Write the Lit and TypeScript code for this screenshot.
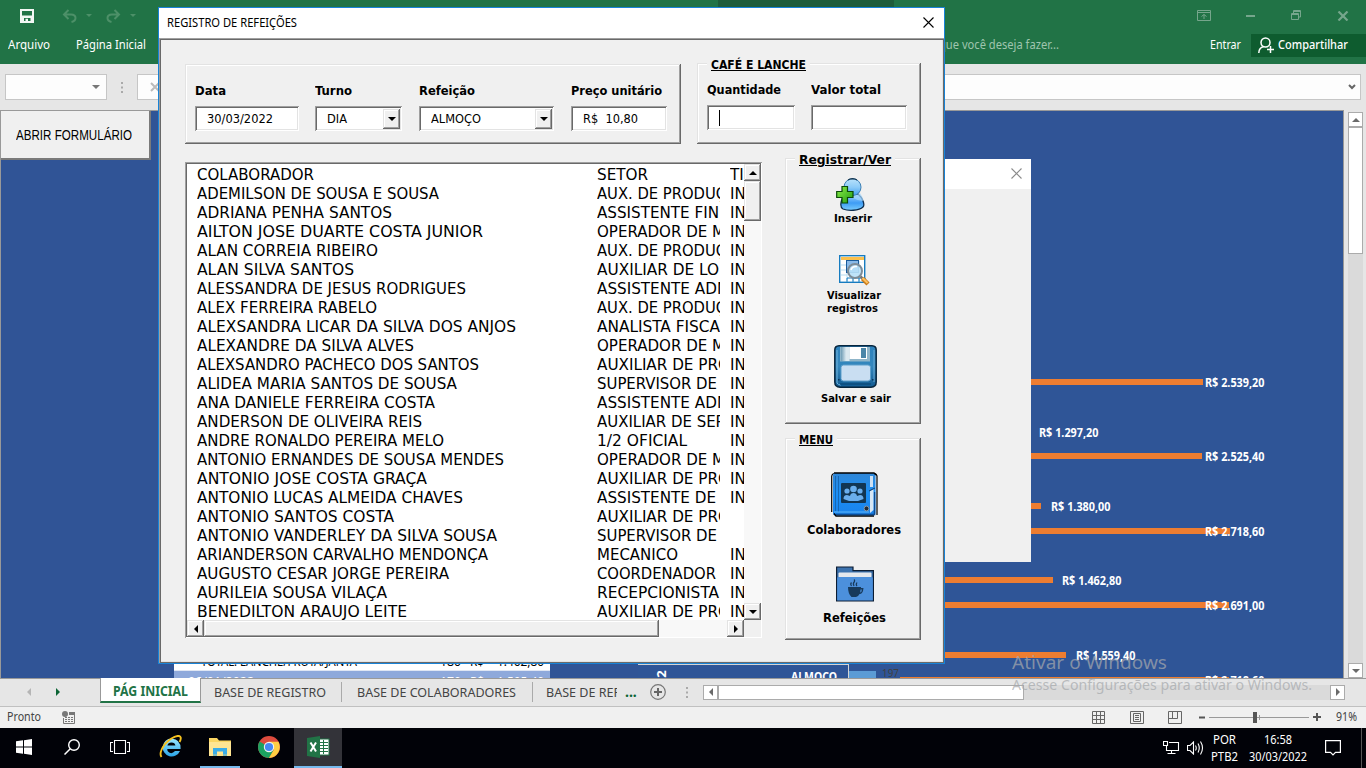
import { LitElement, html, css, svg } from "lit";
import { customElement, property } from "lit/decorators.js";

/** One line of text drawn to an exact width (w) or with a fixed horizontal factor (k). */
@customElement("x-text")
class XText extends LitElement {
  @property({ type: Number }) w = 0;
  @property({ type: Number }) k = 1;
  static styles = css`
    :host { display: inline-block; white-space: pre; flex: none; }
    span { display: inline-block; transform-origin: 0 50%; white-space: pre; }
    :host([u]) span { text-decoration: underline; }
  `;
  render() {
    return html`<span><slot></slot></span>`;
  }
  firstUpdated() {
    const s = this.renderRoot.querySelector("span") as HTMLElement;
    const n = s.getBoundingClientRect().width;
    const k = this.w ? this.w / n : this.k;
    s.style.transform = `scaleX(${k})`;
    this.style.width = `${n * k}px`;
  }
}

const t = (s: string, w: number) => html`<x-text .w=${w}>${s}</x-text>`;
const tu = (s: string, w: number) => html`<x-text u .w=${w}>${s}</x-text>`;
const LIST_K = 1.05;

/* name, name width, sector, sector width, type */
const people: [string, number, string, number, string][] = [
  ["COLABORADOR", 117, "SETOR", 51, "TI"],
  ["ADEMILSON DE SOUSA E SOUSA", 242, "AUX. DE PRODUÇ", 129, "IN"],
  ["ADRIANA PENHA SANTOS", 195, "ASSISTENTE FIN", 122, "IN"],
  ["AILTON JOSE DUARTE COSTA JUNIOR", 286, "OPERADOR DE M", 128, "IN"],
  ["ALAN CORREIA RIBEIRO", 181, "AUX. DE PRODUÇ", 129, "IN"],
  ["ALAN SILVA SANTOS", 157, "AUXILIAR DE LO", 122, "IN"],
  ["ALESSANDRA DE JESUS RODRIGUES", 269, "ASSISTENTE ADM", 133, "IN"],
  ["ALEX FERREIRA RABELO", 180, "AUX. DE PRODUÇ", 129, "IN"],
  ["ALEXSANDRA LICAR DA SILVA DOS ANJOS", 319, "ANALISTA FISCA", 123, "IN"],
  ["ALEXANDRE DA SILVA ALVES", 217, "OPERADOR DE M", 128, "IN"],
  ["ALEXSANDRO PACHECO DOS SANTOS", 282, "AUXILIAR DE PRO", 133, "IN"],
  ["ALIDEA MARIA SANTOS DE SOUSA", 260, "SUPERVISOR DE", 120, "IN"],
  ["ANA DANIELE FERREIRA COSTA", 238, "ASSISTENTE ADM", 133, "IN"],
  ["ANDERSON DE OLIVEIRA REIS", 225, "AUXILIAR DE SER", 129, "IN"],
  ["ANDRE RONALDO PEREIRA MELO", 247, "1/2 OFICIAL", 90, "IN"],
  ["ANTONIO ERNANDES DE SOUSA MENDES", 307, "OPERADOR DE M", 128, "IN"],
  ["ANTONIO JOSE COSTA GRAÇA", 230, "AUXILIAR DE PRO", 133, "IN"],
  ["ANTONIO LUCAS ALMEIDA CHAVES", 266, "ASSISTENTE DE", 119, "IN"],
  ["ANTONIO SANTOS COSTA", 197, "AUXILIAR DE PRO", 133, ""],
  ["ANTONIO VANDERLEY DA SILVA SOUSA", 300, "SUPERVISOR DE", 120, ""],
  ["ARIANDERSON CARVALHO MENDONÇA", 291, "MECANICO", 81, "IN"],
  ["AUGUSTO CESAR JORGE PEREIRA", 252, "COORDENADOR", 119, "IN"],
  ["AURILEIA SOUSA VILAÇA", 190, "RECEPCIONISTA", 122, "IN"],
  ["BENEDILTON ARAUJO LEITE", 210, "AUXILIAR DE PRO", 133, "IN"],
];

/* bar middle y, bar end x, label x, label; coordinates on the sheet canvas */
const bars: [number, number, number, string][] = [
  [382, 1203, 1205, "R$ 2.539,20"],
  [432, 1027, 1039, "R$ 1.297,20"],
  [456, 1202, 1205, "R$ 2.525,40"],
  [506, 1041, 1051, "R$ 1.380,00"],
  [531, 1230, 1205, "R$ 2.718,60"],
  [580, 1053, 1062, "R$ 1.462,80"],
  [605, 1229, 1205, "R$ 2.691,00"],
  [655, 1066, 1076, "R$ 1.559,40"],
  [680, 1229, 1205, "R$ 2.718,60"],
];

const icon = (w: number, h: number, body: unknown) =>
  html`<svg width=${w} height=${h} viewBox="0 0 ${w} ${h}">${body}</svg>`;

const arrow = (dir: string) => {
  const d: Record<string, string> = {
    up: "M4 0 L8 4 H0Z", down: "M0 0 H8 L4 4Z", left: "M4 0 V8 L0 4Z", right: "M0 0 V8 L4 4Z",
  };
  const v = dir === "up" || dir === "down";
  return html`<svg width=${v ? 8 : 4} height=${v ? 4 : 8}><path d=${d[dir]} fill="currentColor" /></svg>`;
};

const userAdd = icon(30, 33, svg`
  <defs>
    <linearGradient id="ua" x1="0" y1="0" x2="0" y2="1"><stop offset="0" stop-color="#b9e2fb"/><stop offset=".5" stop-color="#8ccbf8"/><stop offset="1" stop-color="#3f9def"/></linearGradient>
    <linearGradient id="ub" x1="0" y1="0" x2="0" y2="1"><stop offset="0" stop-color="#a8d8ff"/><stop offset=".55" stop-color="#3e9cf5"/><stop offset="1" stop-color="#79cdfd"/></linearGradient>
    <linearGradient id="uc" x1="0" y1="0" x2="1" y2="1"><stop offset="0" stop-color="#8df04a"/><stop offset="1" stop-color="#1f9b10"/></linearGradient>
  </defs>
  <path d="M7 31 C3 29 5 20 10 16 H22 C27 20 29 27 27 29 C23 33 12 33 7 31Z" fill="url(#ub)" stroke="#0c2c4e" stroke-width="1.300"/>
  <circle cx="16.500" cy="9.200" r="8.500" fill="url(#ua)" stroke="#3d7fb4" stroke-width="1"/>
  <path d="M12 2Q14 .8 16.500 .7Q19 .8 21 2" fill="none" stroke="#16364f" stroke-width="1.200"/>
  <path d="M17 18Q21 18 24 15Q27 19 27.500 23Q22 23 17 20Z" fill="#a5d7fd" opacity=".7"/>
  <path d="M6 8.500 H11.500 V13.500 H17 V19.500 H11.500 V25 H6 V19.500 H.7 V13.500 H6Z" fill="url(#uc)" stroke="#0a4a08" stroke-width="1.200"/>`);

const tableSearch = icon(31, 31, svg`
  <rect x=".7" y=".7" width="25" height="26.600" fill="#fff" stroke="#177cc0" stroke-width="1.400"/>
  <rect x="2" y="2" width="23" height="3" fill="#fbc04c"/>
  <path d="M2 10h6M2 15h6M2 20h6M8 6v21M14 6v21M20 6v21" stroke="#b6dcf2" fill="none"/>
  <rect x="7.500" y="5.500" width="12" height="12" fill="#89b9e8" stroke="#1c5c9c"/>
  <path d="M8 27v-4h18v4M14 23v4M20 23v4" stroke="#177cc0" fill="none"/>
  <circle cx="16" cy="16" r="7" fill="#b9e1fa" fill-opacity=".9" stroke="#7d8c98" stroke-width="2"/>
  <path d="M12 15 Q13 11 18 11.500" stroke="#fff" stroke-width="1.600" fill="none"/>
  <path d="M21.500 21.500 L24 24" stroke="#777" stroke-width="2.500"/>
  <path d="M23.500 23.500 L29 29" stroke="#c97a1a" stroke-width="4.400"/><path d="M23.500 23 L28.600 28" stroke="#fdc05e" stroke-width="2.200"/>`);

const floppy = icon(43, 43, svg`
  <defs><linearGradient id="fa" x1="0" y1="0" x2="0" y2="1"><stop offset="0" stop-color="#2d82bd"/><stop offset=".5" stop-color="#3487bd"/><stop offset="1" stop-color="#125a91"/></linearGradient>
  <linearGradient id="fb" x1="0" y1="0" x2="1" y2="0"><stop offset="0" stop-color="#6e9cb5"/><stop offset=".6" stop-color="#dbe9f0"/></linearGradient></defs>
  <path d="M5 .8 H38 Q42.200 1 42.200 5 V37 Q42.200 42 37 42.200 H6 Q.8 42 .8 37 V5 Q.8 1 5 .8Z" fill="url(#fa)" stroke="#08263e" stroke-width="1.500"/>
  <path d="M3 5V38Q4 40 7 40" stroke="#72b4dc" fill="none"/><path d="M40 5V37" stroke="#6ba9d2"/>
  <rect x="6" y="2" width="30" height="14.500" fill="#8fb5c9"/>
  <rect x="7" y="2" width="8.500" height="14" fill="url(#fb)"/>
  <rect x="15.500" y="2" width="17.500" height="12" fill="#fff"/><rect x="27" y="3" width="5" height="10" fill="#4b86a8"/>
  <rect x="7" y="20" width="29.500" height="16" rx="2.500" fill="#c9def2" stroke="#5e9fcb"/>
  <path d="M6 39H37" stroke="#0d4c7d" stroke-width="1.500"/><rect x="4" y="34" width="1.500" height="1.500" fill="#09345a"/><rect x="38" y="34" width="1.500" height="1.500" fill="#09345a"/>`);

const contactBook = icon(47, 45, svg`
  <defs><linearGradient id="cb" x1="0" y1="0" x2="0" y2="1"><stop offset="0" stop-color="#2f86d6"/><stop offset=".5" stop-color="#1b8ff5"/><stop offset="1" stop-color="#1a82ea"/></linearGradient></defs>
  <path d="M.7 40V4Q1 2 3 1.500M46 43V4Q45.500 2 44 1.500" stroke="#000" stroke-width="1.200" fill="none"/>
  <rect x="2" y="1" width="42.500" height="42.500" rx="2.500" fill="url(#cb)"/>
  <path d="M3 1H43L45 3M3 41.500L5 44H43" stroke="#000" stroke-width="1.400" fill="none"/>
  <path d="M4.500 4V39M7.500 4V40" stroke="#1567b4" stroke-width="1"/>
  <path d="M3 40H38" stroke="#5cb5f8"/><path d="M5 42.500H43.500V20" stroke="#0c4c94" stroke-width="1.500" fill="none"/>
  <rect x="39" y="4" width="3" height="11" fill="#cfe1f2"/><path d="M39 19L42.500 17V38L39 41Z" fill="#d7e7f5"/><path d="M38 19L44 16" stroke="#123a67"/>
  <rect x="10" y="11" width="25" height="20" rx="1" fill="#123652"/>
  <g fill="#6aaeec"><circle cx="22.500" cy="17" r="3.300"/><circle cx="16" cy="19" r="2.600"/><circle cx="29" cy="19" r="2.600"/>
  <path d="M12.500 27Q12.500 23 16 23L19 24Q19.500 21 22.500 21Q25.500 21 26 24L29 23Q32.500 23 32.500 27L27 29H18Z"/></g>
  <circle cx="35.500" cy="36.500" r="2.400" fill="#222c36" stroke="#8a9aa8"/>`);

const cupFolder = icon(38, 36, svg`
  <path d="M.6 35V1H17V4.600H37.400V35Z" fill="#3c72ae" stroke="#0c1d33" stroke-width="1.200"/>
  <rect x="2.500" y="6.500" width="33" height="5" rx="1" fill="#e4e8ed"/>
  <path d="M1.200 11.500 Q2 11 3 11H35Q36.800 11 36.800 12V34.300H1.200Z" fill="#4c90dc"/>
  <path d="M12 21H25V22H27.500Q27 28 23.500 28Q22 31 20 31H15.500Q12 28 12 21ZM24.500 23.500L24.200 26.500Q25.800 26 25.900 23.500Z" fill="#173a5c"/>
  <path d="M15.500 20Q14 18 15.500 16.500M18 20Q16.500 17.500 18.500 15.500Q19 14.500 18 13.500M21 20Q19.500 18.500 21 16.500" stroke="#173a5c" stroke-width="1.200" fill="none"/>`);

const chrome = icon(22, 22, svg`
  <circle cx="11" cy="11" r="11" fill="#dd4b3e"/>
  <path d="M11 11L1.500 5.500A11 11 0 0 0 11 22L15.800 13.700Z" fill="#1ba261"/>
  <path d="M11 22A11 11 0 0 0 20.500 5.800H11L15.800 13.700Z" fill="#ffce43"/>
  <circle cx="11" cy="11" r="5.200" fill="#f3f3f3"/><circle cx="11" cy="11" r="4.100" fill="#4688f4"/>`);

const ie = icon(24, 24, svg`
  <defs><linearGradient id="ie" x1="0" y1="0" x2="0" y2="1"><stop offset="0" stop-color="#9be6ff"/><stop offset="1" stop-color="#2aa5e8"/></linearGradient></defs>
  <path d="M12.500 3.500A9 9 0 1 0 21 16H16Q12.500 20 9 16.500Q8.200 15.500 8.300 14H21.600Q22 4.200 12.500 3.500ZM8.400 10.500Q9 7.500 12.500 7.500Q16 7.700 16.400 10.500Z" fill="url(#ie)"/>
  <path d="M2.500 22Q-.5 18 6 9Q13 1.500 19.500 .8Q23.500 1.500 20.500 7" fill="none" stroke="#f5c11f" stroke-width="1.900"/>`);

const folderIcon = icon(22, 20, svg`
  <path d="M0 3V1H8L10 3.500H22V19H0Z" fill="#fbd663"/><path d="M0 5H22V19H0Z" fill="#ffe593"/>
  <path d="M4 11H18V19H14V14.500H8V19H4Z" fill="#3aace8"/><path d="M4 17H18V19H4Z" fill="#fbd36a" opacity=".35"/>`);

const excelIcon = icon(23, 22, svg`
  <rect x="11" y="3" width="11" height="16" fill="#fff" stroke="#217346"/>
  <path d="M12 6.500H21M12 9.500H21M12 12.500H21M12 15.500H21M16.500 4V18" stroke="#217346" fill="none"/>
  <path d="M0 2L13 0V22L0 20Z" fill="#217346"/>
  <path d="M3.500 6.500L9 15.500M9 6.500L3.500 15.500" stroke="#fff" stroke-width="2"/>`);

@customElement("app-root")
class AppRoot extends LitElement {
  static styles = css`
    :host { display: block; position: relative; width: 1366px; height: 768px; overflow: hidden;
      font-family: "Noto Sans", "Open Sans", sans-serif; font-size: 12px; line-height: 16px; color: #000; }
    * { box-sizing: border-box; }
    svg { display: block; flex: none; }
    .row { display: flex; align-items: center; }
    .excel { display: flex; flex-direction: column; width: 1366px; height: 768px; }

    .head { height: 64px; background: #217346; color: #fff; display: grid; grid-template-rows: 31px 33px; }
    .quick { padding: 0 17px 0 20px; color: #f2f7f4; }
    .undo { margin-left: 28px; color: #4d9068; gap: 9px; }
    .redo { margin-left: 14px; color: #4d9068; gap: 9px; }
    .tools { height: 8px; width: 176px; background: #1e5c3a; align-self: flex-start; margin-left: 582px; }
    .winbtns { margin-left: auto; color: #76a68c; gap: 35px; }
    .menu { padding-left: 8px; padding-bottom: 5px; }
    .menu .m2 { margin-left: 26px; }
    .tell { margin-left: 793px; color: #9fc5ae; width: 134px; }
    .enter { margin-left: 137px; }
    .share { margin-left: auto; width: 115px; height: 23px; background: #0e5c2f; padding-left: 7px; gap: 4px; font-weight: 500; }

    .formula { height: 46px; background: #e6e6e6; padding-left: 5px; }
    .namebox { width: 102px; height: 26px; border: 1px solid #c6c6c6; background: #fdfdfd; justify-content: flex-end; padding-right: 6px; color: #777; }
    .dots { width: 30px; padding-left: 14px; color: #aaa; }
    .fbox { width: 1224px; height: 26px; border: 1px solid #c6c6c6; background: #fdfdfd; justify-content: space-between; padding: 0 4px 0 12px; color: #bbb; }

    .mid { height: 568px; display: flex; background: #e6e6e6; }
    .sheet { position: relative; width: 1344px; height: 568px; background: #305496; border: 1px solid #999; border-bottom: 0; overflow: hidden; }
    .canvas { position: absolute; left: -1px; top: -111px; width: 1344px; height: 680px; }
    .chart { position: absolute; left: 638px; top: 160px; width: 705px; height: 520px; background: #2f5597; }
    .open { position: relative; width: 150px; height: 49px; background: #f0f0f0; border-right: 2px solid #7a7a7a; border-bottom: 2px solid #7a7a7a; padding-left: 15px; font: 14px/16px "Liberation Sans", sans-serif; }
    .bar { position: absolute; left: 900px; height: 6px; background: #ed7d31; }
    .blabel { position: absolute; color: #fff; font-weight: 700; font-size: 11.500px; }
    .pivot { position: absolute; left: 174px; top: 652px; width: 376px; font-size: 12.500px; }
    .prow { height: 19px; background: #fff; display: grid; grid-template-columns: 27px 239px 30px 27px 50px; align-items: center; padding-top: 1px; border-bottom: 1px solid #dfe6f3; }
    .prow.sub { background: #8ea9db; color: #fff; padding-top: 2px; border: 0; height: 20px; grid-template-columns: 14px 252px 30px 27px 50px; }
    .lbox { position: absolute; left: 638px; top: 664px; width: 211px; height: 100px; border: 1px solid #d5d5d5; border-left: 0; }
    .two { position: absolute; left: 657px; top: 666px; transform: rotate(-90deg); color: #fff; font-weight: 700; font-size: 13px; }
    .alm { position: absolute; left: 791px; top: 669px; color: #fff; font-weight: 700; font-size: 12px; }
    .sky { position: absolute; left: 849px; top: 671px; width: 27px; height: 9px; background: #5b9bd5; }
    .n197 { position: absolute; left: 882px; top: 665px; color: #404040; font-size: 11px; }
    .vs { width: 22px; padding: 2px 3px 0 4px; display: flex; flex-direction: column; }
    .sbtn { width: 15px; height: 15px; background: #fff; border: 1px solid #ababab; display: flex; align-items: center; justify-content: center; color: #6a6a6a; flex: none; }
    .vthumb { width: 15px; height: 127px; background: #fff; border: 1px solid #ababab; }
    .vtrack { flex: 1; background: #dadada; }

    .tabs { height: 28px; background: #e6e6e6; border-top: 1px solid #999; font-size: 13px; color: #444; padding-bottom: 1px; }
    .nav { width: 100px; padding: 0 40px 0 27px; justify-content: space-between; color: #b5b5b5; }
    .nav .on { color: #0c6535; }
    .tab.act { width: 101px; height: 25px; align-self: flex-start; margin-top: -1px; padding: 3px 1px 0 0; background: #fff; border: 1px solid #999; border-top: 0; border-bottom: 2px solid #217346; color: #217346; font-weight: 700; justify-content: center; font-size: 13.500px; }
    .t1 { padding-left: 13px; width: 141px; border-right: 1px solid #aaa; height: 20px; }
    .t2 { padding-left: 15px; width: 191px; border-right: 1px solid #aaa; height: 20px; }
    .t3 { padding-left: 13px; width: 84px; overflow: hidden; height: 20px; }
    .more { color: #0c6535; font-weight: 700; width: 33px; padding-left: 8px; font-size: 14px; }
    .grip { padding-left: 20px; }
    .hs { margin-left: 15px; height: 15px; }
    .hthumb { width: 306px; height: 15px; background: #fff; border: 1px solid #ababab; }
    .htrack { width: 306px; height: 15px; background: #dadada; }

    .status { height: 22px; background: #f0f0f0; border-top: 1px solid #c0c0c0; color: #444; padding: 0 0 1px 7px; }
    .status .rec { margin-left: 21px; }
    .status .views { margin-left: 1017px; gap: 25px; color: #666; }
    .views svg + svg + svg { margin-left: -1px; }
    .zoomer { margin-left: 17px; color: #555; gap: 4px; }
    .pct { margin-left: 15px; }

    .task { height: 40px; background: #010208; color: #fff; }
    .task .cell { width: 48px; height: 40px; display: flex; align-items: center; justify-content: center; border-bottom: 2px solid transparent; }
    .task .cell.run { width: 40px; margin: 0 4px 0 6px; border-color: #76b9ed; }
    .task .cell.act { background: #333339; border-color: #76b9ed; }
    .task .cell.ie { width: 50px; padding-left: 4px; }
    .task .cell.gc { margin-right: 2px; padding-left: 2px; }
    .spk { margin: 0 7px; }
    .tray { margin-left: auto; }
    .stack { display: flex; flex-direction: column; align-items: center; gap: 1px; }
    .lang { margin-right: 11px; }
    .clock { margin-right: 18px; }
    .edge { width: 1px; height: 40px; background: #555; margin-left: 20px; margin-right: 4px; }

    .back { position: absolute; left: 600px; top: 159px; width: 431px; height: 403px; background: #f0f0f0; }
    .back .bar2 { height: 30px; background: #fff; justify-content: flex-end; padding: 0 9px 2px 0; color: #8a8a8a; }

    .dialog { position: absolute; left: 158px; top: 7px; width: 787px; height: 657px; border: 1px solid #1883d7; background: #f0f0f0; display: flex; flex-direction: column; }
    .dtitle { height: 30px; background: #fff; padding: 0 10px 1px 8px; justify-content: space-between; flex: none; }
    .client { flex: 1; padding: 25px 0 0 26px; box-shadow: inset 1px 1px #a0a0a0, inset -1px -1px #696969, inset 2px 2px #696969, inset -2px -2px #e3e3e3;
      font-family: "DejaVu Sans Condensed", "DejaVu Sans", sans-serif; font-stretch: condensed; }
    .top { display: flex; gap: 16px; align-items: flex-end; }
    .frame { position: relative; box-shadow: inset -1px -1px #696969, inset 1px 1px #e3e3e3, inset -2px -2px #a0a0a0, inset 2px 2px #fff; }
    .legend { position: absolute; left: 10px; top: -6px; padding: 0 4px; background: #f0f0f0; font-weight: 700; font-size: 12.500px; line-height: 16px; display: flex; }
    .f1 { width: 496px; height: 80px; display: flex; padding: 19px 0 0 10px; }
    .f2 { width: 224px; height: 81px; display: flex; padding: 19px 0 0 10px; gap: 16px; }
    .field { display: flex; flex-direction: column; gap: 7px; font-weight: 700; font-size: 12.500px; }
    .sunk { box-shadow: inset 1px 1px #a0a0a0, inset -1px -1px #fff, inset 2px 2px #696969, inset -2px -2px #e3e3e3; background: #fff; }
    .inp { height: 25px; padding: 2px 2px 2px 12px; font-weight: 400; font-size: 12px; display: flex; align-items: center; }
    .w104 { width: 104px; } .w87 { width: 87px; } .w135 { width: 135px; } .w96 { width: 96px; } .w88 { width: 88px; }
    .g1 { margin-right: 16px; } .g2 { margin-right: 17px; }
    .btn { background: #f0f0f0; box-shadow: inset -1px -1px #696969, inset 1px 1px #e3e3e3, inset -2px -2px #a0a0a0, inset 2px 2px #fff; display: flex; align-items: center; justify-content: center; flex: none; }
    .dd { width: 17px; height: 20px; margin-left: auto; }
    .caret { width: 1px; height: 16px; background: #000; }
    .bottom { display: flex; gap: 23px; margin-top: 14px; }
    .list { margin-top: 4px; width: 577px; height: 476px; padding: 2px; display: grid; grid-template-columns: 557px 17px; grid-template-rows: 456px 17px; }
    .rows { overflow: hidden; font-size: 16px; line-height: 19px; padding-top: 1px; }
    .r { display: grid; grid-template-columns: 400px 123px 10px 14px; padding-left: 10px; height: 19px; }
    .r > div { overflow: hidden; height: 19px; }
    .track { background: #f8f8f8; }
    .lv { display: flex; flex-direction: column; }
    .lv .btn { width: 17px; height: 17px; }
    .lv .th { height: 40px; }
    .sp { flex: 1; }
    .lh { display: flex; }
    .lh .btn { height: 17px; width: 17px; }
    .lh .th { width: 455px; }
    .corner { background: #f0f0f0; }
    .side { width: 136px; display: flex; flex-direction: column; gap: 14px; }
    .f3 { height: 266px; display: flex; flex-direction: column; align-items: center; padding-top: 20px; font-weight: 700; font-size: 11px; line-height: 13px; }
    .f4 { height: 202px; display: flex; flex-direction: column; align-items: center; padding-top: 34px; font-weight: 700; font-size: 12.500px; }
    .ua { margin-right: 5px; }
    .rt1 { margin-left: 2px; }
    .rt2 { margin-left: 4px; }
    .i1 { margin-bottom: 30px; padding-top: 1px; }
    .i2 { display: flex; flex-direction: column; margin: 3px 0 30px 2px; }
    .i3 { margin: 4px 0 0 6px; }
    .c1 { margin: 5px 0 28px 2px; }
    .c2 { margin: 8px 0 0 2px; }
    .wm { position: absolute; left: 1012px; top: 650px; color: rgba(165,168,172,.72); display: flex; flex-direction: column; }
    .wm1 { font-size: 18.500px; line-height: 24px; }
    .wm2 { font-size: 14px; line-height: 22px; }
  `;

  head() {
    const hook = svg`<path d="M6.500 1L2 5.500L6.500 10M2.500 5.500H9Q13.500 5.500 13.500 9Q13.500 12 9.500 13" fill="none" stroke="currentColor" stroke-width="2"/>`;
    const small = html`<svg width="6" height="3"><path d="M0 0H6L3 3Z" fill="currentColor" /></svg>`;
    return html`<div class="head">
      <div class="row quick">
        ${icon(14, 14, svg`<path d="M0 0H14V14H0ZM2 2V6.500H12V2ZM4 9V12H5.500V9.800H8V12H10.500V9Z" fill="currentColor" fill-rule="evenodd"/>`)}
        <div class="row undo">${icon(15, 14, hook)}${small}</div>
        <div class="row redo">${icon(15, 14, svg`<g transform="translate(15 0) scale(-1 1)">${hook}</g>`)}${small}</div>
        <div class="tools"></div>
        <div class="row winbtns">
          ${icon(14, 11, svg`<path d="M.5 .5H13.500V10.500H.5ZM.5 2.500H13.500M7 9V4.500M4.500 6.500L7 4.500L9.500 6.500" fill="none" stroke="currentColor"/>`)}
          ${icon(10, 3, svg`<path d="M0 2H9" stroke="currentColor" stroke-width="2"/>`)}
          ${icon(11, 11, svg`<path d="M.5 3.500H7.500V9.500H.5ZM.5 4.500H7.500M2.500 3V.5H9.500V7H8M2.500 1.500H9.500" fill="none" stroke="currentColor"/>`)}
          ${icon(12, 10, svg`<path d="M1.500 .5L10.500 9.500M10.500 .5L1.500 9.500" stroke="currentColor" stroke-width="2.200"/>`)}
        </div>
      </div>
      <div class="row menu">
        ${t("Arquivo", 42)}<span class="m2">${t("Página Inicial", 70)}</span>
        <span class="tell">${t("que você deseja fazer...", 120)}</span>
        <span class="enter">${t("Entrar", 31)}</span>
        <div class="row share">${icon(16, 16, svg`<g fill="none" stroke="#fff" stroke-width="1.500"><circle cx="7.500" cy="5.500" r="4.500"/><path d="M.8 16Q1 10.500 5.500 9.800M9 12.500H16M12.500 9V16"/></g>`)}${t("Compartilhar", 70)}</div>
      </div>
    </div>`;
  }

  sheet() {
    return html`<div class="mid">
      <div class="sheet">
        <div class="canvas">
          <div class="chart"></div>
          ${bars.map(([y, x]) => html`<div class="bar" style="top:${y - 3}px;width:${x - 900}px"></div>`)}
          ${bars.map(([y, , lx, s]) => html`<div class="blabel" style="top:${y - 7.5}px;left:${lx}px">${t(s, 59.5)}</div>`)}
          <div class="pivot">
            <div class="prow"><span></span>${t("TOTAL: LANCHE/FRUTA/JANTA", 156)}${t("180", 21)}${t("R$", 14)}${t("1.462,80", 47)}</div>
            <div class="prow sub"><span></span>${t("06/01/2022", 66)}${t("170", 21)}${t("R$", 14)}${t("1.595,40", 47)}</div>
          </div>
          <div class="lbox"></div>
          <div class="two">2</div><div class="alm">${t("ALMOÇO", 46)}</div>
          <div class="sky"></div><div class="n197">${t("197", 17)}</div>
        </div>
        <div class="row open">${t("ABRIR FORMULÁRIO", 116)}</div>
      </div>
      <div class="vs"><div class="sbtn">${arrow("up")}</div><div class="vthumb"></div><div class="vtrack"></div><div class="sbtn">${arrow("down")}</div></div>
    </div>`;
  }

  bottomBars() {
    return html`
      <div class="row tabs">
        <div class="row nav">${arrow("left")}<span class="on">${arrow("right")}</span></div>
        <div class="row tab act">${t("PÁG INICIAL", 75)}</div>
        <div class="row t1">${t("BASE DE REGISTRO", 112)}</div>
        <div class="row t2">${t("BASE DE COLABORADORES", 159)}</div>
        <div class="row t3">${t("BASE DE REF", 74)}</div>
        <div class="more">...</div>
        ${icon(16, 16, svg`<circle cx="8" cy="8" r="7.300" fill="none" stroke="#777" stroke-width="1.200"/><path d="M4 8H12M8 4V12" stroke="#666" stroke-width="2"/>`)}
        <div class="grip">${icon(2, 11, svg`<path d="M0 1H2M0 5.500H2M0 10H2" stroke="#aaa" stroke-width="2"/>`)}</div>
        <div class="row hs"><div class="sbtn">${arrow("left")}</div><div class="hthumb"></div><div class="htrack"></div><div class="sbtn">${arrow("right")}</div></div>
      </div>
      <div class="row status">
        ${t("Pronto", 34)}
        <span class="rec">${icon(13, 13, svg`<circle cx="3" cy="3" r="3" fill="#777"/><path d="M7 1H13V4H7Z" fill="#777"/><path d="M1.500 7V12.500H12.500V3M3 6.500H11M3 8.500H11M3 10.500H11" fill="none" stroke="#777"/><path d="M5.500 5V12M8.500 5V12" stroke="#f0f0f0"/>`)}</span>
        <div class="row views">
          ${icon(13, 13, svg`<path d="M.5 .5H12.500V12.500H.5ZM.5 4.500H12.500M.5 8.500H12.500M4.500 .5V12.500M8.500 .5V12.500" fill="none" stroke="currentColor"/>`)}
          ${icon(14, 13, svg`<path d="M.5 .5H13.500V12.500H.5ZM3.500 2.500H10.500V10.500H3.500ZM5 4.500H9M5 6.500H9M5 8.500H9" fill="none" stroke="currentColor"/>`)}
          ${icon(14, 13, svg`<path d="M.5 .5H13.500V12.500H.5ZM4.500 .5V7.500M9.500 .5V7.500M.5 7.500H9.500" fill="none" stroke="currentColor"/>`)}
        </div>
        <div class="row zoomer">
          ${icon(6, 3, svg`<path d="M0 1.500H6" stroke="currentColor" stroke-width="2"/>`)}
          ${icon(100, 11, svg`<path d="M0 5.500H100M50.500 3V8" stroke="#999"/><rect x="44" y="0" width="4" height="11" fill="#555"/>`)}
          ${icon(8, 8, svg`<path d="M0 4H8M4 0V8" stroke="currentColor" stroke-width="2"/>`)}
        </div>
        <span class="pct">${t("91%", 21)}</span>
      </div>
      <div class="row task">
        <div class="cell">${icon(16, 16, svg`<path d="M0 2.300L7 1.300V7.500H0ZM8 1.200L16 0V7.500H8ZM0 8.500H7V14.700L0 13.700ZM8 8.500H16V16L8 14.800Z" fill="#fff"/>`)}</div>
        <div class="cell">${icon(16, 16, svg`<circle cx="10" cy="6" r="5.300" fill="none" stroke="#fff" stroke-width="1.400"/><path d="M6.300 9.700L.5 15.500" stroke="#fff" stroke-width="1.500"/>`)}</div>
        <div class="cell">${icon(20, 14, svg`<path d="M4.500 .5H15.500V13.500H4.500ZM3 2.500H.5V11.500H3M17 2.500H19.500V11.500H17" fill="none" stroke="#fff" stroke-width="1.100"/>`)}</div>
        <div class="cell ie">${ie}</div>
        <div class="cell run">${folderIcon}</div>
        <div class="cell gc">${chrome}</div>
        <div class="cell act">${excelIcon}</div>
        <div class="row tray">
          ${icon(17, 14, svg`<path d="M.5 .5H4.500V4.500H.5ZM6 1.500H15.500V9.500H3.500V5M8.500 10V12.500M4.500 12.500H12.500" fill="none" stroke="#fff" stroke-width="1.100"/>`)}
          <span class="spk">${icon(17, 14, svg`<path d="M.5 4.500H3L6.500 1V13L3 9.500H.5ZM8.500 4.500Q10 7 8.500 9.500M11 2.500Q13.500 7 11 11.500M13.500 .5Q17.500 7 13.500 13.500" fill="none" stroke="#fff" stroke-width="1.100"/>`)}</span>
          <div class="stack lang">${t("POR", 23)}${t("PTB2", 27)}</div>
          <div class="stack clock">${t("16:58", 28)}${t("30/03/2022", 58)}</div>
          ${icon(16, 16, svg`<path d="M.6 .6H15.400V12.400H10.500L8 15L5.500 12.400H.6Z" fill="none" stroke="#fff" stroke-width="1.200"/>`)}
          <div class="edge"></div>
        </div>
      </div>`;
  }

  combo(s: string, w: number, cls: string) {
    return html`<div class="sunk inp ${cls}">${t(s, w)}<div class="btn dd">${arrow("down")}</div></div>`;
  }

  dialog() {
    const x = icon(11, 11, svg`<path d="M.5 .5L10.500 10.500M10.500 .5L.5 10.500" stroke="currentColor" stroke-width="1.100"/>`);
    return html`
      <div class="back"><div class="row bar2">${x}</div></div>
      <div class="dialog">
        <div class="row dtitle">${t("REGISTRO DE REFEIÇÕES", 130)}${x}</div>
        <div class="client">
          <div class="top">
            <div class="frame f1">
              <div class="field g1">${t("Data", 31)}<div class="sunk inp w104">${t("30/03/2022", 66)}</div></div>
              <div class="field g2">${t("Turno", 37)}${this.combo("DIA", 20, "w87")}</div>
              <div class="field g2">${t("Refeição", 56)}${this.combo("ALMOÇO", 50, "w135")}</div>
              <div class="field">${t("Preço unitário", 91)}<div class="sunk inp w96">${t("R$  10,80", 55)}</div></div>
            </div>
            <div class="frame f2">
              <div class="legend">${tu("CAFÉ E LANCHE", 95)}</div>
              <div class="field">${t("Quantidade", 74)}<div class="sunk inp w88"><div class="caret"></div></div></div>
              <div class="field">${t("Valor total", 70)}<div class="sunk inp w96"></div></div>
            </div>
          </div>
          <div class="bottom">
            <div class="sunk list">
              <div class="rows">${people.map(([n, w, s, sw, k]) => html`<div class="r"><div>${t(n, w)}</div>
                <div>${t(s, sw)}</div><span></span><div><x-text .k=${LIST_K}>${k}</x-text></div></div>`)}</div>
              <div class="lv track"><div class="btn">${arrow("up")}</div><div class="btn th"></div><div class="sp"></div><div class="btn">${arrow("down")}</div></div>
              <div class="lh track"><div class="btn">${arrow("left")}</div><div class="btn th"></div><div class="sp"></div><div class="btn">${arrow("right")}</div></div>
              <div class="corner"></div>
            </div>
            <div class="side">
              <div class="frame f3">
                <div class="legend">${tu("Registrar/Ver", 92)}</div>
                <div class="ua">${userAdd}</div><div class="i1">${t("Inserir", 38)}</div>
                <div class="rt1">${tableSearch}</div><div class="i2">${t("Visualizar", 54)}${t("registros", 51)}</div>
                <div class="rt2">${floppy}</div><div class="i3">${t("Salvar e sair", 70)}</div>
              </div>
              <div class="frame f4">
                <div class="legend">${tu("MENU", 34)}</div>
                <div class="rt1">${contactBook}</div><div class="c1">${t("Colaboradores", 94)}</div>
                <div class="rt2">${cupFolder}</div><div class="c2">${t("Refeições", 63)}</div>
              </div>
            </div>
          </div>
        </div>
      </div>`;
  }

  render() {
    return html`
      <div class="excel">
        ${this.head()}
        <div class="row formula">
          <div class="row namebox">${arrow("down")}</div>
          <div class="dots">${icon(2, 11, svg`<path d="M0 1H2M0 5.500H2M0 10H2" stroke="#aaa" stroke-width="2"/>`)}</div>
          <div class="row fbox">${icon(10, 10, svg`<path d="M1 1L9 9M9 1L1 9" stroke="currentColor" stroke-width="2"/>`)}${icon(8, 6, svg`<path d="M1 1L4 4L7 1" fill="none" stroke="#666" stroke-width="2"/>`)}</div>
        </div>
        ${this.sheet()}
        ${this.bottomBars()}
      </div>
      ${this.dialog()}
      <div class="wm"><div class="wm1">${t("Ativar o Windows", 155)}</div><div class="wm2">${t("Acesse Configurações para ativar o Windows.", 300)}</div></div>`;
  }
}
